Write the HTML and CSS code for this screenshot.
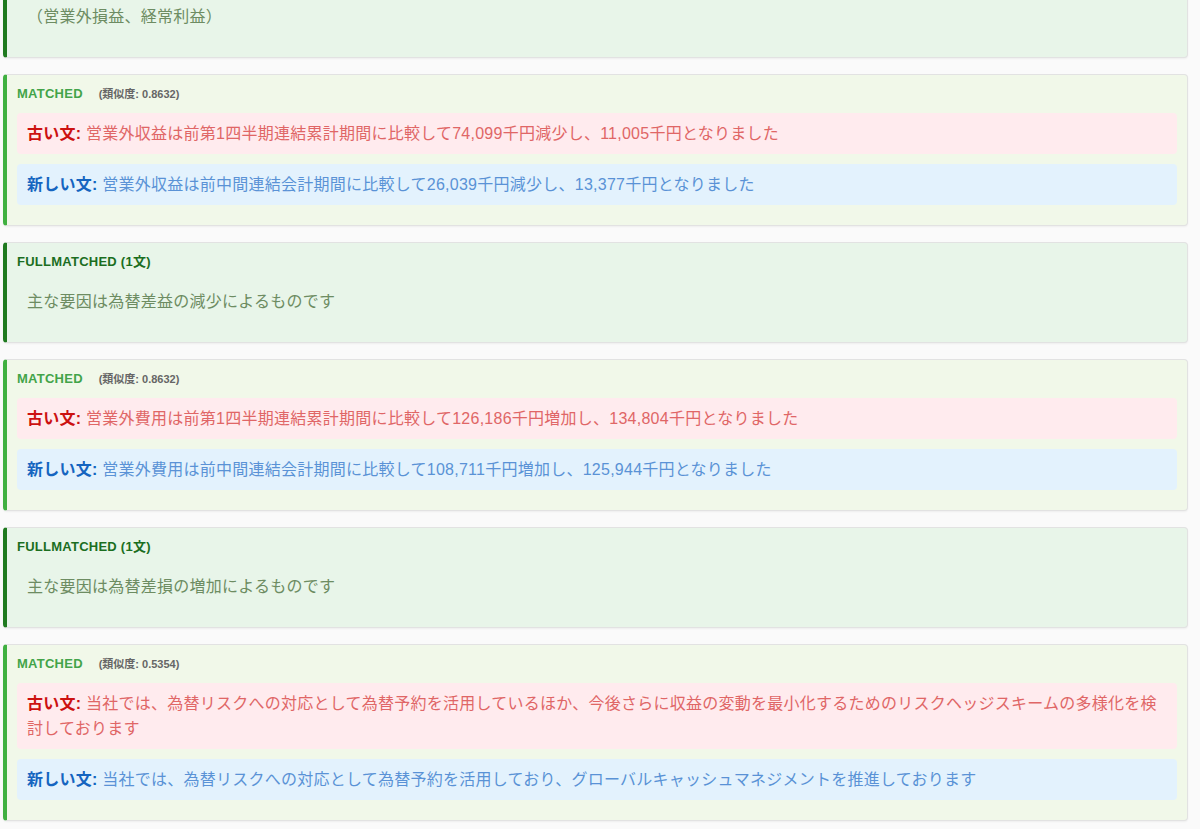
FILE: index.html
```html
<!DOCTYPE html>
<html lang="ja">
<head>
    <meta charset="UTF-8">
    <meta name="viewport" content="width=device-width, initial-scale=1.0">
    <title>文比較結果</title>
    <link rel="stylesheet" href="styles.css">
</head>
<body>

    <div class="results">
        <div class="result full first">
            <div class="result-label">FULLMATCHED (1文)</div>
            <div class="sentence">（営業外損益、経常利益）</div>
        </div>

        <div class="result matched">
            <div class="result-label">MATCHED <span class="score">(類似度: 0.8632)</span></div>
            <div class="diff old"><b>古い文:</b> 営業外収益は前第1四半期連結累計期間に比較して74,099千円減少し、11,005千円となりました</div>
            <div class="diff new"><b>新しい文:</b> 営業外収益は前中間連結会計期間に比較して26,039千円減少し、13,377千円となりました</div>
        </div>

        <div class="result full">
            <div class="result-label">FULLMATCHED (1文)</div>
            <div class="sentence">主な要因は為替差益の減少によるものです</div>
        </div>

        <div class="result matched">
            <div class="result-label">MATCHED <span class="score">(類似度: 0.8632)</span></div>
            <div class="diff old"><b>古い文:</b> 営業外費用は前第1四半期連結累計期間に比較して126,186千円増加し、134,804千円となりました</div>
            <div class="diff new"><b>新しい文:</b> 営業外費用は前中間連結会計期間に比較して108,711千円増加し、125,944千円となりました</div>
        </div>

        <div class="result full">
            <div class="result-label">FULLMATCHED (1文)</div>
            <div class="sentence">主な要因は為替差損の増加によるものです</div>
        </div>

        <div class="result matched">
            <div class="result-label">MATCHED <span class="score">(類似度: 0.5354)</span></div>
            <div class="diff old"><b>古い文:</b> 当社では、為替リスクへの対応として為替予約を活用しているほか、今後さらに収益の変動を最小化するためのリスクヘッジスキームの多様化を検討しております</div>
            <div class="diff new"><b>新しい文:</b> 当社では、為替リスクへの対応として為替予約を活用しており、グローバルキャッシュマネジメントを推進しております</div>
        </div>
    </div>

</body>
</html>
```

FILE: styles.css
```css
body {
    font-family: "Liberation Sans", "Noto Sans CJK JP", sans-serif;
    margin: 0;
    padding: 0;
    background-color: #fafafa;
    overflow: hidden;
}
.results {
    padding: 0 12px 0 3px;
}
.result {
    margin-bottom: 16px;
    padding: 10px;
    border: 1px solid #e2e2e2;
    border-left: 4px solid #40b040;
    border-radius: 4px;
    box-shadow: 0 1px 2px rgba(0, 0, 0, 0.05);
    letter-spacing: 0.25px;
}
.result.first {
    margin-top: -43px;
}
.full {
    background-color: #e8f5e9;
    border-left-color: #1f7a1f;
}
.matched {
    background-color: #f1f8e9;
}
.result-label {
    font-size: 13px;
    font-weight: bold;
    line-height: 18px;
    margin-bottom: 10px;
}
.full .result-label {
    color: #1b6e1f;
}
.matched .result-label {
    color: #43a449;
}
.score {
    margin-left: 12px;
    font-size: 11px;
    color: #666;
    letter-spacing: 0;
}
.sentence, .diff {
    font-size: 16px;
    line-height: 25px;
    padding: 8px 10px;
    margin-bottom: 10px;
    border-radius: 4px;
}
.sentence {
    color: #6d8c62;
}
.old {
    background-color: #ffebee;
    color: #e06666;
}
.old b {
    color: #cc1111;
}
.new {
    background-color: #e3f2fd;
    color: #5a92d6;
}
.new b {
    color: #1565c0;
}
```
